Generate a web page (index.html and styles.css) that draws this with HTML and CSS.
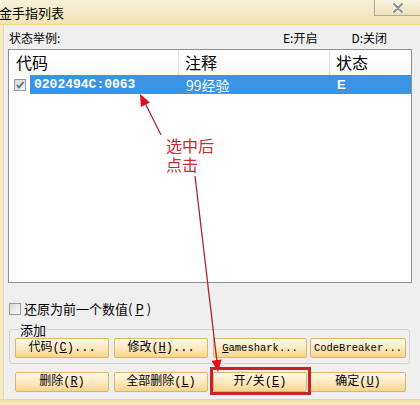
FILE: index.html
```html
<!DOCTYPE html>
<html lang="zh-CN">
<head>
  <meta charset="UTF-8" />
  <title>金手指列表</title>
  <link rel="stylesheet" href="styles.css">
</head>
<body>
  <div class="titlebar">
    <span class="title">金手指列表</span>
    <span class="close">
      <svg width="12" height="10" viewBox="0 0 12 10">
        <path d="M2 1 L10 9 M10 1 L2 9" stroke="#fff" stroke-width="3.5" stroke-linecap="round"/>
        <path d="M2 1 L10 9 M10 1 L2 9" stroke="#8a8a8a" stroke-width="2" stroke-linecap="round"/>
      </svg>
    </span>
  </div>

  <div class="frame">
    <div class="frame-left"></div>
    <div class="dialog">
      <div class="status-row">
        <span>状态举例:</span>
        <span class="status-on">E:开启</span>
        <span class="status-off">D:关闭</span>
      </div>

      <div class="list">
        <div class="list-head">
          <div class="col col-code">代码</div>
          <div class="col col-note">注释</div>
          <div class="col col-state">状态</div>
        </div>
        <div class="list-row">
          <span class="check">
            <svg width="10" height="10" viewBox="0 0 10 10"><path d="M2 5 L4 7.5 L8.5 2" stroke="#5a6f8c" stroke-width="1.8" fill="none"/></svg>
          </span>
          <div class="row-sel">
            <span class="cell cell-code">0202494C:0063</span>
            <span class="cell cell-note">99经验</span>
            <span class="cell cell-state">E</span>
          </div>
        </div>
      </div>

      <label class="restore">
        <span class="check check-empty"></span>
        还原为前一个数值(<u>P</u>)
      </label>

      <fieldset class="group">
        <legend>添加</legend>
        <div class="btn-grid">
          <button>代码(<u>C</u>)...</button>
          <button>修改(<u>H</u>)...</button>
          <button class="btn-en"><u>G</u>ameshark...</button>
          <button class="btn-en last">CodeBreaker...</button>
        </div>
      </fieldset>

      <div class="btn-grid btn-bottom">
        <button>删除(<u>R</u>)</button>
        <button>全部删除(<u>L</u>)</button>
        <button>开/关(<u>E</u>)</button>
        <button class="last">确定(<u>U</u>)</button>
      </div>
    </div>
  </div>
  <div class="frame-bottom"></div>

  <!-- anotaciones encima del dialogo -->
  <div class="red-box"></div>
  <div class="note">选中后<br>点击</div>
  <svg class="arrows" width="420" height="405" viewBox="0 0 420 405">
    <line x1="161" y1="135" x2="144" y2="101" stroke="#a82430" stroke-width="1.3"/>
    <polygon points="140,94 149.9,102.5 140.9,106.9" fill="#e0101c"/>
    <line x1="195" y1="176" x2="217" y2="362" stroke="#a82430" stroke-width="1.3"/>
    <polygon points="218,372 221.6,359.5 211.6,360.7" fill="#e0101c"/>
  </svg>
</body>
</html>
```

FILE: styles.css
```css
* {
  box-sizing: border-box;
}

body {
  margin: 0;
  width: 420px;
  height: 405px;
  overflow: hidden;
  position: relative;
  font-family: "Noto Sans CJK SC", sans-serif;
  font-size: 12px;
  color: #000;
  background-color: #efefef;
}

.titlebar {
  height: 25px;
  display: flex;
  justify-content: space-between;
  align-items: flex-start;
  background: linear-gradient(#f8f1da, #f0e2b4);
  border-bottom: 1px solid #f4d77e;
}

.title {
  font-size: 13px;
  line-height: 13px;
  padding-top: 6px;
  margin-left: -1px;
}

.close {
  width: 46px;
  height: 16px;
  display: flex;
  align-items: center;
  justify-content: center;
  border-left: 1px solid #b3a88c;
  border-bottom: 1px solid #b3a88c;
  background: linear-gradient(#faf4e2, #eee1b9);
}

.frame {
  display: flex;
  height: 374px;
}

.frame-left {
  width: 5px;
  background-color: #f6ebc4;
  border-right: 1px solid #e6d9ab;
}

.frame-bottom {
  height: 6px;
  background: linear-gradient(#f3e2a6, #f7eac0);
  border-top: 1px solid #e9d58f;
}

.dialog {
  flex: 1;
  padding: 0 8px 0 4px;
}

.status-row {
  height: 24px;
  display: flex;
  align-items: center;
  padding-left: 1px;
  font-size: 12px;
}

.status-on {
  margin-left: auto;
}

.status-off {
  margin-left: 34px;
  margin-right: 25px;
}

/* lista */
.list {
  height: 234px;
  border: 1px solid #8d8f92;
  background-color: #fff;
}

.list-head {
  display: flex;
  height: 25px;
  font-size: 16px;
  line-height: 25px;
  background: linear-gradient(#fff, #fafafa);
}

.col {
  padding-left: 6px;
  border-right: 1px solid #e3e3e3;
}

.col-code {
  width: 170px;
  padding-left: 7px;
}

.col-note {
  width: 151px;
}

.col-state {
  flex: 1;
  border-right: none;
}

.list-row {
  display: flex;
  align-items: center;
  height: 19px;
  padding-left: 5px;
}

.check {
  width: 12px;
  height: 12px;
  display: flex;
  align-items: center;
  justify-content: center;
  border: 1px solid #8f9aa6;
  background: linear-gradient(135deg, #d9d9d4, #f6f6f4);
}

.row-sel {
  flex: 1;
  height: 19px;
  margin-left: 4px;
  display: flex;
  align-items: center;
  background-color: #3a94e5;
  color: #fff;
  font-weight: bold;
}

.cell-code {
  width: 149px;
  padding-left: 4px;
  font-family: "Liberation Mono", monospace;
  font-size: 13px;
}

.cell-note {
  width: 151px;
  padding-left: 7px;
  font-size: 14px;
  font-weight: normal;
}

.cell-state {
  padding-left: 7px;
  font-family: "Liberation Sans", sans-serif;
  font-size: 13px;
}

.restore {
  height: 13px;
  margin-top: 19px;
  padding-left: 1px;
  display: flex;
  align-items: center;
  gap: 3px;
  font-size: 13px;
}

.check-empty {
  background: linear-gradient(135deg, #dcdcd6, #f8f8f6);
}

/* grupo añadir */
.group {
  margin: 7px 2px 0 1px;
  padding: 0 3px 5px 5px;
  border: 1px solid #d3d2c6;
  border-radius: 3px;
}

.group legend {
  margin-left: 4px;
  padding: 0 1px;
  font-size: 13px;
  line-height: 15px;
}

.btn-grid {
  display: grid;
  grid-template-columns: 94px 94px 94px 94px;
  column-gap: 5px;
  margin-top: 1px;
}

.btn-bottom {
  margin-top: 8px;
  padding-left: 7px;
}

button {
  height: 20px;
  padding: 0;
  font-family: "Liberation Mono", "Noto Sans CJK SC", monospace;
  font-size: 12px;
  line-height: 18px;
  color: #000;
  background: linear-gradient(#fff9ea, #fbe6b8 60%, #f6d48c);
  border: 1px solid #dcb46a;
  border-radius: 2px;
}

.btn-en {
  font-size: 10.5px;
}

.last {
  margin-left: -2px;
}

/* anotaciones */
.arrows {
  position: absolute;
  top: 0;
  left: 0;
  pointer-events: none;
}

.note {
  position: absolute;
  left: 166px;
  top: 136px;
  font-size: 16px;
  line-height: 19px;
  color: #c62b30;
}

.red-box {
  position: absolute;
  left: 210px;
  top: 367px;
  width: 101px;
  height: 28px;
  border: 3px solid #c4252b;
}
```
